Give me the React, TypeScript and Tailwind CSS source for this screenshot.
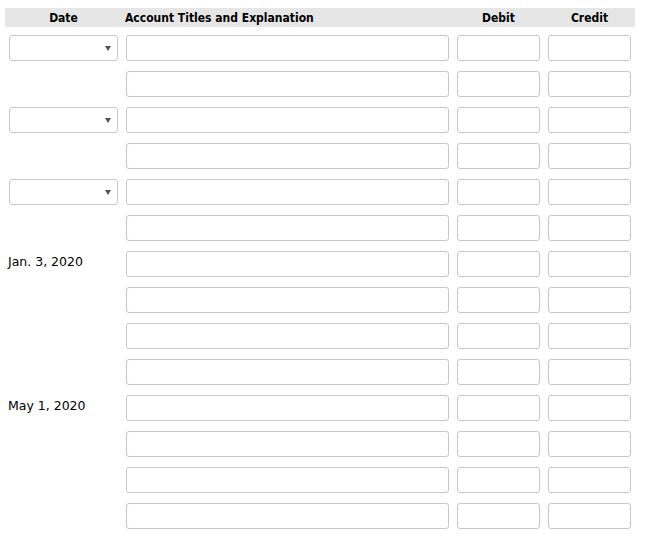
const rows: Array<{ date: "select" | string | null }> = [
  { date: "select" },
  { date: null },
  { date: "select" },
  { date: null },
  { date: "select" },
  { date: null },
  { date: "Jan. 3, 2020" },
  { date: null },
  { date: null },
  { date: null },
  { date: "May 1, 2020" },
  { date: null },
  { date: null },
  { date: null },
];

const inputCls =
  "block h-[26px] w-full rounded-[3px] border border-[#c8c8c8] bg-white outline-none";

function DateSelect() {
  return (
    <div className="relative h-[26px] w-full rounded-[3px] border border-[#c8c8c8] bg-white">
      <svg
        className="absolute right-[6px] top-[10px]"
        width="6"
        height="5"
        viewBox="0 0 6 5"
      >
        <path d="M0 0h6L3 5z" fill="#555" />
      </svg>
    </div>
  );
}

export default function App() {
  return (
    <div
      className="min-h-screen bg-white pl-[5px] pt-[8px] text-black"
      style={{ fontFamily: '"DejaVu Sans", Verdana, sans-serif' }}
    >
      <div className="w-[630px]">
        <div
          className="grid h-[19px] grid-cols-[117px_331px_91px_91px] items-center bg-[#e6e6e6] text-[12px] font-bold"
          style={{ fontFamily: '"DejaVu Sans Condensed", "DejaVu Sans", sans-serif' }}
        >
          <div className="text-center">Date</div>
          <div className="pl-[3px]">Account Titles and Explanation</div>
          <div className="text-center">Debit</div>
          <div className="text-center">Credit</div>
        </div>
        <div className="mt-[3px]">
          {rows.map((row, i) => (
            <div
              key={i}
              className="grid h-[36px] grid-cols-[117px_331px_91px_91px] items-center"
            >
              <div className="px-[4px]">
                {row.date === "select" ? (
                  <DateSelect />
                ) : row.date ? (
                  <div className="-ml-[1px] -mt-[4px] text-[12.5px]">{row.date}</div>
                ) : null}
              </div>
              <div className="px-[4px]">
                <input className={inputCls} />
              </div>
              <div className="px-[4px]">
                <input className={inputCls} />
              </div>
              <div className="px-[4px]">
                <input className={inputCls} />
              </div>
            </div>
          ))}
        </div>
      </div>
    </div>
  );
}
